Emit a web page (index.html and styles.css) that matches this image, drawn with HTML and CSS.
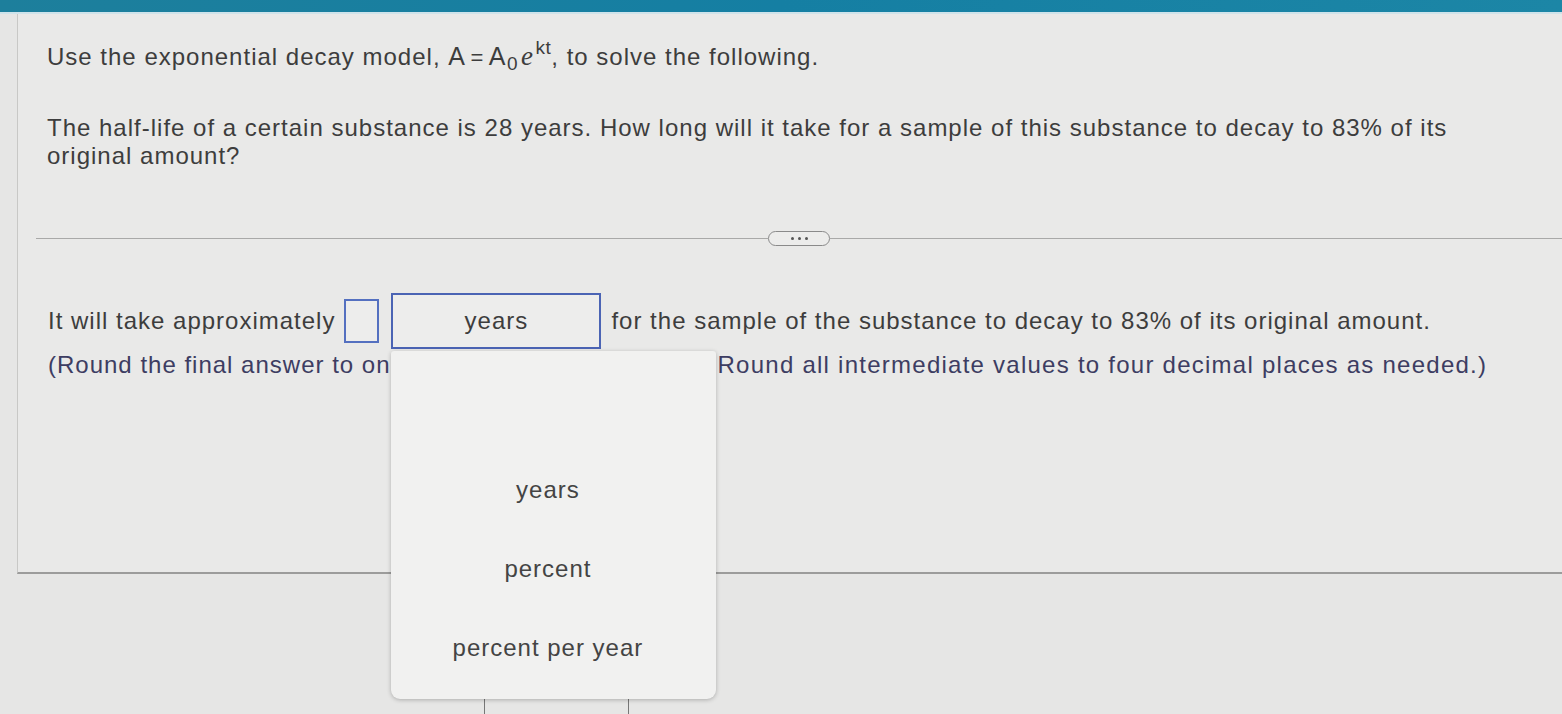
FILE: index.html
```html
<!DOCTYPE html>
<html>
<head>
<meta charset="utf-8">
<link rel="stylesheet" href="styles.css">
</head>
<body>
<div class="topbar"></div>
<div class="page">
  <div class="panel">
    <div class="question">
      <p class="intro">Use the exponential decay model, <span class="math">A<span class="eq">=</span>A<sub>0</sub><i class="e">e</i><sup>kt</sup></span>, to solve the following.</p>
      <p class="problem">The half-life of a certain substance is 28 years. How long will it take for a sample of this substance to decay to 83% of its original amount?</p>
    </div>
    <div class="divider">
      <span class="line"></span>
      <span class="more"><i></i><i></i><i></i></span>
      <span class="line"></span>
    </div>
    <div class="answer">
      <div class="row">
        <span>It will take approximately</span>
        <span class="box small"></span>
        <span class="select-wrap">
          <span class="box select">years</span>
          <div class="menu">
            <div class="opt"></div>
            <div class="opt">years</div>
            <div class="opt">percent</div>
            <div class="opt">percent per year</div>
          </div>
        </span>
        <span>for the sample of the substance to decay to 83% of its original amount.</span>
      </div>
      <div class="note">(Round the final answer to on<span class="hidden">e decimal place as needed. </span><span class="tail">Round all intermediate values to four decimal places as needed.)</span></div>
    </div>
  </div>
  <div class="bottom">
    <div class="btn-edge"></div>
  </div>
</div>
</body>
</html>
```
FILE: styles.css
```css
html, body {
  margin: 0;
  padding: 0;
}
body {
  width: 1562px;
  height: 714px;
  overflow: hidden;
  background: #e6e6e5;
  font-family: "Liberation Sans", Arial, sans-serif;
  color: #3d3d3d;
  letter-spacing: 1px;
}
.topbar {
  height: 12px;
  background: linear-gradient(90deg, #1d7f9c 0%, #157fa3 50%, #1c86a6 100%);
  border-bottom: 2px solid #cfe3ea;
}
.page {
  display: flex;
  flex-direction: column;
}
.panel {
  margin-left: 17px;
  height: 560px;
  border-left: 1px solid #c8c8c6;
  border-bottom: 2px solid #9c9c9b;
  background: #e9e9e8;
  box-sizing: border-box;
}
.question {
  padding: 28px 0 0 29px;
  font-size: 24px;
  line-height: 28px;
}
.question p {
  margin: 0;
}
.intro {
  margin-bottom: 42px !important;
}
.math {
  white-space: nowrap;
  letter-spacing: 0.5px;
  font-size: 25px;
}
.eq {
  padding: 0 5px;
  font-size: 22px;
}
.math sub {
  font-size: 19px;
  vertical-align: -5px;
  line-height: 0;
  padding-left: 1px;
}
.math .e {
  font-family: "Liberation Serif", serif;
  font-size: 27px;
  padding-left: 3px;
}
.math sup {
  font-size: 19px;
  vertical-align: 11px;
  line-height: 0;
  padding-left: 2px;
}
.problem {
  width: 1440px;
}
.divider {
  margin: 61px 0 0 18px;
  display: flex;
  align-items: center;
}
.divider .line {
  flex: 1;
  height: 1px;
  background: #a9a9a8;
}
.more {
  width: 60px;
  height: 13px;
  border: 1px solid #8a8a8a;
  border-radius: 8px;
  background: #ececeb;
  display: flex;
  justify-content: center;
  align-items: center;
  gap: 4px;
}
.more i {
  width: 3px;
  height: 3px;
  border-radius: 50%;
  background: #555;
}
.answer {
  padding: 47px 0 0 30px;
  font-size: 24px;
}
.row {
  display: flex;
  align-items: center;
  height: 56px;
}
.box {
  box-sizing: border-box;
  border: 2px solid #5470c0;
  background: #ededec;
  display: inline-block;
}
.small {
  width: 35px;
  height: 44px;
  margin-left: 9px;
  margin-right: 12px;
}
.select-wrap {
  position: relative;
  margin-right: 10px;
}
.select {
  width: 210px;
  height: 56px;
  line-height: 52px;
  text-align: center;
  border-color: #4b64b4;
}
.menu {
  position: absolute;
  left: 0;
  top: 58px;
  width: 325px;
  box-sizing: border-box;
  padding: 20px 0 12px;
  background: #f1f1f0;
  border-radius: 3px 3px 9px 9px;
  box-shadow: 0 1px 4px rgba(0, 0, 0, 0.25);
  z-index: 2;
}
.opt {
  height: 79px;
  line-height: 79px;
  text-align: center;
  color: #444;
  padding-right: 12px;
}
.note {
  margin-top: 1px;
  line-height: 30px;
  color: #3d3d62;
  white-space: nowrap;
}
.hidden {
  display: inline-block;
  width: 327px;
  overflow: hidden;
  vertical-align: bottom;
  letter-spacing: 0;
}
.tail {
  letter-spacing: 1.25px;
}
.bottom {
  flex: 1;
  height: 140px;
  background: #e1e1df;
  position: relative;
}
.btn-edge {
  position: absolute;
  left: 484px;
  top: 110px;
  width: 143px;
  height: 60px;
  border-left: 1px solid #777;
  border-right: 1px solid #777;
}
```
